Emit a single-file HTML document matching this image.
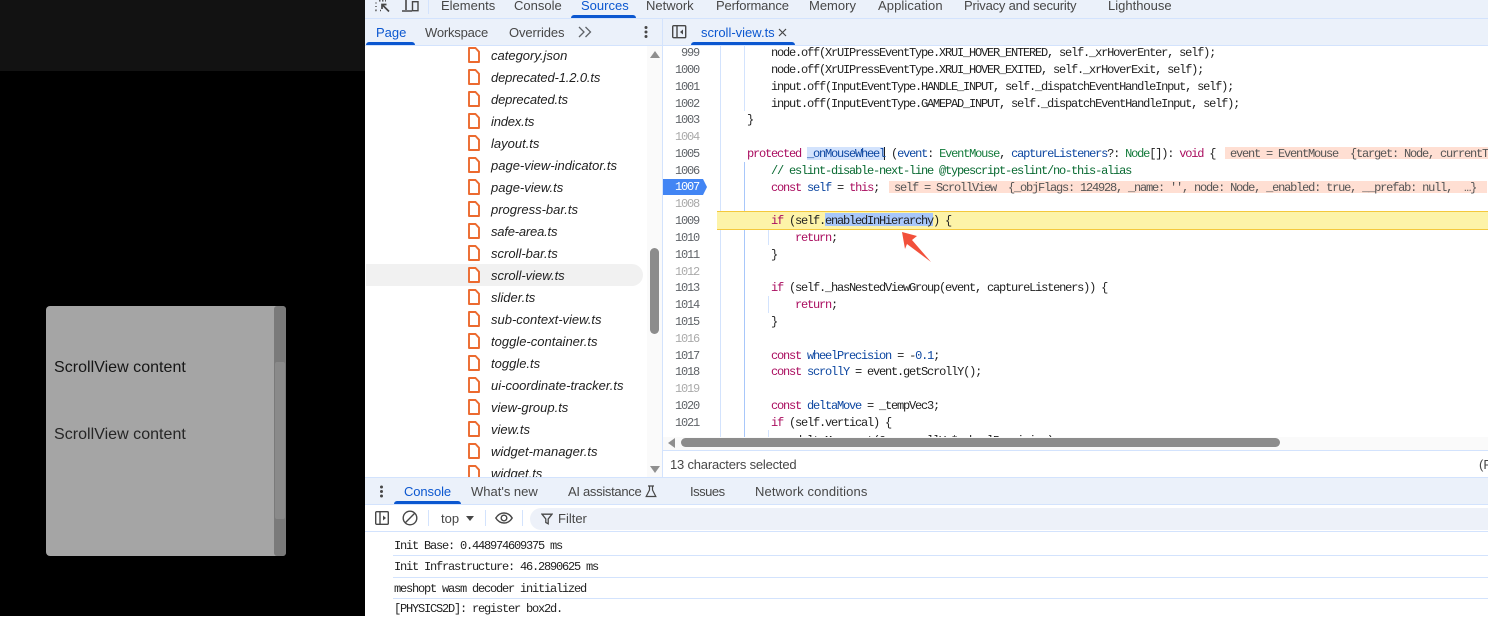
<!DOCTYPE html>
<html><head><meta charset="utf-8">
<style>
html,body{margin:0;padding:0;width:1488px;height:616px;overflow:hidden;background:#fff}
*{box-sizing:border-box}
.a{position:absolute}
.t{position:absolute;font:13px/18px "Liberation Sans",sans-serif;color:#474747;white-space:nowrap}
.b{color:#0b57d0}
.f{position:absolute;left:491px;font:italic 13px/18px "Liberation Sans",sans-serif;color:#1f1f1f;white-space:nowrap}
.i{position:absolute;left:468px;width:12px;height:16px}
.n{position:absolute;margin-top:1px;left:663px;width:36px;text-align:right;font:12px/16px "Liberation Mono",monospace;letter-spacing:-1.2px;color:#5f6368}
.n.l{color:#aaa}
.c{position:absolute;margin-top:1px;font:12px/16px "Liberation Mono",monospace;letter-spacing:-1.2px;color:#1f1f1f;white-space:pre}
.k{color:#aa0d5f}.g{color:#127a3a}.v{color:#0d47a1}.m{color:#0a6b33}.u{color:#555}
</style></head><body>
<div class="a" style="left:0;top:0;width:365px;height:616px;background:#000"></div>
<div class="a" style="left:0;top:0;width:365px;height:71px;background:#121212"></div>
<div class="a" style="left:46px;top:306px;width:240px;height:250px;background:#a5a5a5;border-radius:4px"></div>
<div class="a" style="left:274px;top:306px;width:12px;height:250px;background:#7a7a7a;border-radius:3px"></div>
<div class="a" style="left:275px;top:362px;width:10px;height:157px;background:#8a8a8a;border-radius:2px"></div>
<div class="a" style="left:54px;top:358px;font:16px/20px 'Liberation Sans',sans-serif;color:#161616;letter-spacing:.03px;white-space:nowrap">ScrollView content</div>
<div class="a" style="left:54px;top:425px;font:16px/20px 'Liberation Sans',sans-serif;color:#262626;letter-spacing:.03px;white-space:nowrap">ScrollView content</div>

<!-- top toolbar -->
<div class="a" style="left:365px;top:0;width:1123px;height:45px;background:#ebf1fa"></div>
<div class="a" style="left:365px;top:18px;width:1123px;height:1px;background:#d3e3fd"></div>
<div class="a" style="left:365px;top:45px;width:1123px;height:1px;background:#d3e3fd"></div>
<svg class="a" style="left:366px;top:0" width="62" height="14" fill="none" stroke="#474747" stroke-width="1.4">
<path d="M10 2.500v1M10 6v1M10 9.500v1h1M14 10.500h1M13 .8h7" stroke-dasharray="1.500 1.500"/><path d="M23 11.500l-7-7M16 9V4.500h4.500" stroke-width="1.700"/>
<path d="M40 0v10M36 11h10" stroke-width="1.600"/><rect x="46.500" y="1.700" width="5.500" height="9"/></svg>
<div class="a" style="left:428px;top:0;width:1px;height:14px;background:#d3e3fd"></div>
<div class="t" style="left:441px;top:-3px">Elements</div>
<div class="t" style="left:514px;top:-3px">Console</div>
<div class="t b" style="left:581px;top:-3px">Sources</div>
<div class="a" style="left:571px;top:15px;width:65px;height:3px;background:#0b57d0;border-radius:3px 3px 0 0"></div>
<div class="t" style="left:646px;top:-3px">Network</div>
<div class="t" style="left:716px;top:-3px;letter-spacing:-.15px">Performance</div>
<div class="t" style="left:809px;top:-3px">Memory</div>
<div class="t" style="left:878px;top:-3px;letter-spacing:.1px">Application</div>
<div class="t" style="left:964px;top:-3px;letter-spacing:-.2px">Privacy and security</div>
<div class="t" style="left:1108px;top:-3px">Lighthouse</div>

<div class="t b" style="left:376px;top:24px">Page</div>
<div class="a" style="left:366px;top:42px;width:49px;height:3px;background:#0b57d0;border-radius:3px 3px 0 0"></div>
<div class="t" style="left:425px;top:24px;letter-spacing:-.2px">Workspace</div>
<div class="t" style="left:509px;top:24px;letter-spacing:-.1px">Overrides</div>
<svg class="a" style="left:578px;top:26px" width="14" height="12" fill="none" stroke="#5f6368" stroke-width="1.300"><path d="M1 1l5 5-5 5M7.500 1l5 5-5 5"/></svg>
<svg class="a" style="left:643px;top:25px" width="6" height="14" fill="#474747"><circle cx="3" cy="2.500" r="1.500"/><circle cx="3" cy="7" r="1.500"/><circle cx="3" cy="11.500" r="1.500"/></svg>
<div class="a" style="left:662px;top:19px;width:1px;height:458px;background:#d3e3fd"></div>
<svg class="a" style="left:672px;top:25px" width="15" height="14" fill="none" stroke="#474747" stroke-width="1.400"><rect x=".7" y=".7" width="13" height="12" rx="1"/><path d="M5 1v12"/><path d="M11 4.500L8 7l3 2.500z" fill="#474747" stroke="none"/></svg>
<div class="t b" style="left:701px;top:24px">scroll-view.ts</div>
<svg class="a" style="left:778px;top:28px" width="9" height="9" stroke="#474747" stroke-width="1.200"><path d="M1 1l7 7M8 1L1 8"/></svg>
<div class="a" style="left:691px;top:42px;width:104px;height:3px;background:#0b57d0;border-radius:3px 3px 0 0"></div>

<!-- file tree -->
<div class="a" style="left:366px;top:264px;width:277px;height:22px;background:#f1f1f1;border-radius:0 11px 11px 0"></div>
<div class="a" style="left:647px;top:46px;width:15px;height:431px;background:#fafafa"></div>
<div class="a" style="left:650px;top:248px;width:9px;height:86px;background:#8c8c8c;border-radius:5px"></div>
<div class="a" style="left:650px;top:51px;width:0;height:0;border:5px solid transparent;border-top:0;border-bottom:7px solid #8f8f8f"></div>
<div class="a" style="left:650px;top:466px;width:0;height:0;border:5px solid transparent;border-bottom:0;border-top:7px solid #8f8f8f"></div>
<svg width="0" height="0" style="position:absolute"><defs><symbol id="fi" viewBox="0 0 12 16"><path d="M1 1h6.500L11 4.800V15H1z" fill="#fff" stroke="#ec6a2f" stroke-width="1.900" stroke-linejoin="round"/></symbol></defs></svg>
<svg class="i" style="top:47px"><use href="#fi"/></svg><div class="f" style="top:47px">category.json</div>
<svg class="i" style="top:69px"><use href="#fi"/></svg><div class="f" style="top:69px;letter-spacing:-.15px">deprecated-1.2.0.ts</div>
<svg class="i" style="top:91px"><use href="#fi"/></svg><div class="f" style="top:91px;letter-spacing:-.15px">deprecated.ts</div>
<svg class="i" style="top:113px"><use href="#fi"/></svg><div class="f" style="top:113px;letter-spacing:-.2px">index.ts</div>
<svg class="i" style="top:135px"><use href="#fi"/></svg><div class="f" style="top:135px">layout.ts</div>
<svg class="i" style="top:157px"><use href="#fi"/></svg><div class="f" style="top:157px">page-view-indicator.ts</div>
<svg class="i" style="top:179px"><use href="#fi"/></svg><div class="f" style="top:179px">page-view.ts</div>
<svg class="i" style="top:201px"><use href="#fi"/></svg><div class="f" style="top:201px">progress-bar.ts</div>
<svg class="i" style="top:223px"><use href="#fi"/></svg><div class="f" style="top:223px;letter-spacing:-.2px">safe-area.ts</div>
<svg class="i" style="top:245px"><use href="#fi"/></svg><div class="f" style="top:245px">scroll-bar.ts</div>
<svg class="i" style="top:267px"><use href="#fi"/></svg><div class="f" style="top:267px">scroll-view.ts</div>
<svg class="i" style="top:289px"><use href="#fi"/></svg><div class="f" style="top:289px">slider.ts</div>
<svg class="i" style="top:311px"><use href="#fi"/></svg><div class="f" style="top:311px">sub-context-view.ts</div>
<svg class="i" style="top:333px"><use href="#fi"/></svg><div class="f" style="top:333px">toggle-container.ts</div>
<svg class="i" style="top:355px"><use href="#fi"/></svg><div class="f" style="top:355px">toggle.ts</div>
<svg class="i" style="top:377px"><use href="#fi"/></svg><div class="f" style="top:377px">ui-coordinate-tracker.ts</div>
<svg class="i" style="top:399px"><use href="#fi"/></svg><div class="f" style="top:399px">view-group.ts</div>
<svg class="i" style="top:421px"><use href="#fi"/></svg><div class="f" style="top:421px">view.ts</div>
<svg class="i" style="top:443px"><use href="#fi"/></svg><div class="f" style="top:443px">widget-manager.ts</div>
<svg class="i" style="top:465px"><use href="#fi"/></svg><div class="f" style="top:465px">widget.ts</div>

<!-- editor guides -->
<div class="a" style="left:720px;top:46px;width:1px;height:391px;background:#d3e3fd"></div>
<div class="a" style="left:744px;top:46px;width:1px;height:65px;background:#d3e3fd"></div>
<div class="a" style="left:744px;top:162px;width:1px;height:275px;background:#a8c7fa"></div>
<div class="a" style="left:768px;top:228px;width:1px;height:17px;background:#d3e3fd"></div>
<div class="a" style="left:768px;top:296px;width:1px;height:17px;background:#d3e3fd"></div>
<div class="a" style="left:768px;top:430px;width:1px;height:7px;background:#d3e3fd"></div>

<!-- highlights -->
<div class="a" style="left:717px;top:211px;width:771px;height:19px;background:#fdf3a8;border-top:1px solid #f4c83c;border-bottom:1px solid #f4c83c"></div>
<div class="a" style="left:825px;top:213px;width:108px;height:13px;background:#a8c7fa"></div>
<div class="a" style="left:807px;top:147px;width:78px;height:13px;background:#d3e3fd"></div>
<div class="a" style="left:884px;top:147px;width:1px;height:13px;background:#1f1f1f"></div>
<div class="a" style="left:1225px;top:147px;width:263px;height:12px;background:#ffdfd3"></div>
<div class="a" style="left:889px;top:181px;width:598px;height:12px;background:#ffdfd3"></div>
<svg class="a" style="left:663px;top:179px" width="45" height="16"><path d="M0 0H40L44 8 40 16H0z" fill="#4285f4"/></svg>

<!-- line numbers -->
<div class="n" style="top:44px">999</div>
<div class="n" style="top:61px">1000</div>
<div class="n" style="top:78px">1001</div>
<div class="n" style="top:95px">1002</div>
<div class="n" style="top:111px">1003</div>
<div class="n l" style="top:128px">1004</div>
<div class="n" style="top:145px">1005</div>
<div class="n" style="top:162px">1006</div>
<div class="n" style="top:178px;color:#fff">1007</div>
<div class="n l" style="top:195px">1008</div>
<div class="n" style="top:212px">1009</div>
<div class="n" style="top:229px">1010</div>
<div class="n" style="top:246px">1011</div>
<div class="n l" style="top:263px">1012</div>
<div class="n" style="top:279px">1013</div>
<div class="n" style="top:296px">1014</div>
<div class="n" style="top:313px">1015</div>
<div class="n l" style="top:330px">1016</div>
<div class="n" style="top:347px">1017</div>
<div class="n" style="top:363px">1018</div>
<div class="n l" style="top:380px">1019</div>
<div class="n" style="top:397px">1020</div>
<div class="n" style="top:414px">1021</div>

<!-- code -->
<div class="c" style="left:771px;top:44px">node.off(XrUIPressEventType.XRUI_HOVER_ENTERED, self._xrHoverEnter, self);</div>
<div class="c" style="left:771px;top:61px">node.off(XrUIPressEventType.XRUI_HOVER_EXITED, self._xrHoverExit, self);</div>
<div class="c" style="left:771px;top:78px">input.off(InputEventType.HANDLE_INPUT, self._dispatchEventHandleInput, self);</div>
<div class="c" style="left:771px;top:95px">input.off(InputEventType.GAMEPAD_INPUT, self._dispatchEventHandleInput, self);</div>
<div class="c" style="left:747px;top:111px">}</div>
<div class="c" style="left:747px;top:145px"><span class="k">protected</span> <span class="v">_onMouseWheel</span> (<span class="v">event</span>: <span class="g">EventMouse</span>, <span class="v">captureListeners</span>?: <span class="g">Node</span>[]): <span class="k">void</span> {</div>
<div class="c u" style="left:1230px;top:145px;width:258px;overflow:hidden">event = EventMouse  {target: Node, currentTarget: Node}</div>
<div class="c m" style="left:771px;top:162px">// eslint-disable-next-line @typescript-eslint/no-this-alias</div>
<div class="c" style="left:771px;top:179px"><span class="k">const</span> <span class="v">self</span> = <span class="k">this</span>;</div>
<div class="c u" style="left:894px;top:179px">self = ScrollView  {_objFlags: 124928, _name: '', node: Node, _enabled: true, __prefab: null,  …}</div>
<div class="c" style="left:771px;top:212px"><span class="k">if</span> (self.enabledInHierarchy) {</div>
<div class="c k" style="left:795px;top:229px">return<span style="color:#1f1f1f">;</span></div>
<div class="c" style="left:771px;top:246px">}</div>
<div class="c" style="left:771px;top:279px"><span class="k">if</span> (self._hasNestedViewGroup(event, captureListeners)) {</div>
<div class="c k" style="left:795px;top:296px">return<span style="color:#1f1f1f">;</span></div>
<div class="c" style="left:771px;top:313px">}</div>
<div class="c" style="left:771px;top:347px"><span class="k">const</span> <span class="v">wheelPrecision</span> = -<span class="v">0.1</span>;</div>
<div class="c" style="left:771px;top:363px"><span class="k">const</span> <span class="v">scrollY</span> = event.getScrollY();</div>
<div class="c" style="left:771px;top:397px"><span class="k">const</span> <span class="v">deltaMove</span> = _tempVec3;</div>
<div class="c" style="left:771px;top:414px"><span class="k">if</span> (self.vertical) {</div>
<div class="a" style="left:663px;top:432px;width:825px;height:5px;overflow:hidden"><div class="c" style="left:132px;top:0">deltaMove.set(0, -scrollY * wheelPrecision);</div></div>

<svg class="a" style="left:895px;top:226px" width="45" height="42"><path d="M7 6L22 10 17 14 36 36 12 18 10 23z" fill="#f2503b"/></svg>

<!-- h scrollbar -->
<div class="a" style="left:663px;top:437px;width:825px;height:13px;background:#fafafa"></div>
<div class="a" style="left:668px;top:438px;width:0;height:0;border:5px solid transparent;border-left:0;border-right:7px solid #8f8f8f"></div>
<div class="a" style="left:681px;top:438px;width:599px;height:9px;background:#8c8c8c;border-radius:5px"></div>
<div class="a" style="left:663px;top:450px;width:825px;height:1px;background:#d3e3fd"></div>
<div class="t" style="left:670px;top:456px;color:#474747;letter-spacing:-.2px">13 characters selected</div>
<div class="t" style="left:1479px;top:456px">(F</div>

<!-- console -->
<div class="a" style="left:365px;top:477px;width:1123px;height:28px;background:#ebf1fa;border-top:1px solid #d3e3fd;border-bottom:1px solid #d3e3fd"></div>
<svg class="a" style="left:379px;top:485px" width="5" height="13" fill="#474747"><circle cx="2.500" cy="2" r="1.500"/><circle cx="2.500" cy="6.500" r="1.500"/><circle cx="2.500" cy="11" r="1.500"/></svg>
<div class="t b" style="left:404px;top:483px;letter-spacing:-.1px">Console</div>
<div class="a" style="left:394px;top:501px;width:67px;height:3px;background:#0b57d0;border-radius:3px 3px 0 0"></div>
<div class="t" style="left:471px;top:483px">What's new</div>
<div class="t" style="left:568px;top:483px;letter-spacing:-.3px">AI assistance</div>
<svg class="a" style="left:645px;top:485px" width="12" height="13" fill="none" stroke="#474747" stroke-width="1.200"><path d="M3 1h6M4.500 1v4L1.200 11.500h9.600L7.500 5V1"/></svg>
<div class="t" style="left:690px;top:483px;letter-spacing:-.5px">Issues</div>
<div class="t" style="left:755px;top:483px;letter-spacing:.15px">Network conditions</div>

<svg class="a" style="left:375px;top:511px" width="14" height="14" fill="none" stroke="#474747" stroke-width="1.400"><rect x=".7" y=".7" width="12.600" height="12.600" rx="1"/><path d="M5 1v12"/><path d="M8 4.500L11 7 8 9.500z" fill="#474747" stroke="none"/></svg>
<svg class="a" style="left:402px;top:510px" width="16" height="16" fill="none" stroke="#474747" stroke-width="1.400"><circle cx="8" cy="8" r="6.800"/><path d="M3.300 12.700L12.700 3.300"/></svg>
<div class="a" style="left:428px;top:510px;width:1px;height:16px;background:#d3e3fd"></div>
<div class="t" style="left:441px;top:510px">top</div>
<div class="a" style="left:466px;top:516px;width:0;height:0;border:4px solid transparent;border-bottom:0;border-top:5px solid #474747"></div>
<div class="a" style="left:485px;top:510px;width:1px;height:16px;background:#d3e3fd"></div>
<svg class="a" style="left:495px;top:512px" width="18" height="12" fill="none" stroke="#474747" stroke-width="1.400"><path d="M.8 6C3 2.500 5.800 1 9 1s6 1.500 8.200 5C15 9.500 12.200 11 9 11S3 9.500 .8 6z"/><circle cx="9" cy="6" r="2.800"/></svg>
<div class="a" style="left:522px;top:510px;width:1px;height:16px;background:#d3e3fd"></div>
<div class="a" style="left:530px;top:508px;width:958px;height:22px;background:#edf1f9;border-radius:11px 0 0 11px"></div>
<svg class="a" style="left:541px;top:513px" width="12" height="12" fill="none" stroke="#474747" stroke-width="1.300"><path d="M1 1.200h10L7.200 6v4.800L4.800 9.500V6z"/></svg>
<div class="t" style="left:558px;top:510px">Filter</div>
<div class="a" style="left:365px;top:531px;width:1123px;height:1px;background:#d3e3fd"></div>
<div class="c" style="left:394px;top:537px">Init Base: 0.448974609375 ms</div>
<div class="a" style="left:393px;top:555px;width:1095px;height:1px;background:#d3e3fd"></div>
<div class="c" style="left:394px;top:558px">Init Infrastructure: 46.2890625 ms</div>
<div class="a" style="left:393px;top:577px;width:1095px;height:1px;background:#d3e3fd"></div>
<div class="c" style="left:394px;top:580px">meshopt wasm decoder initialized</div>
<div class="a" style="left:393px;top:598px;width:1095px;height:1px;background:#d3e3fd"></div>
<div class="c" style="left:394px;top:600px">[PHYSICS2D]: register box2d.</div>
</body></html>
